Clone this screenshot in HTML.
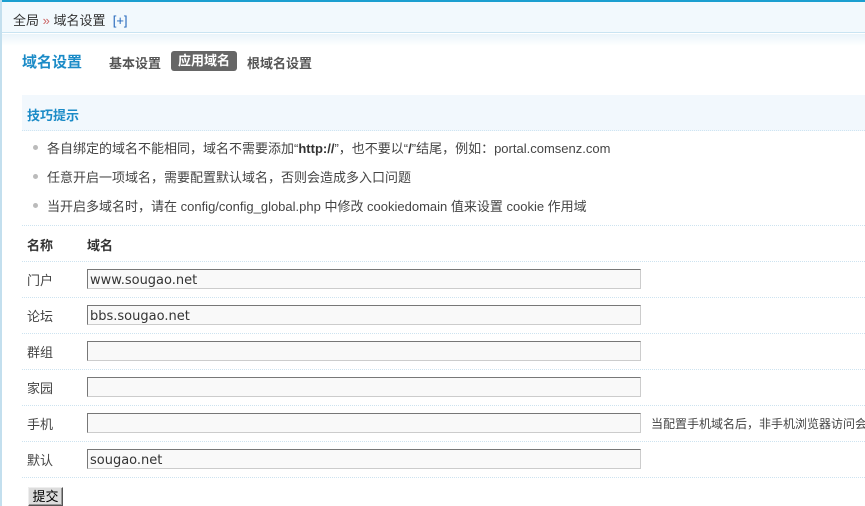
<!DOCTYPE html>
<html><head><meta charset="utf-8"><style>
*{margin:0;padding:0;box-sizing:border-box}
body{width:865px;height:506px;overflow:hidden;background:#fff;font-family:"Liberation Sans","Noto Sans CJK SC",sans-serif;font-size:12px;color:#333;position:relative}
.abs{position:absolute;white-space:nowrap}
.top{left:0;top:0;width:865px;height:2px;background:#1b9fd0}
.bar{left:0;top:2px;width:865px;height:31px;background:#f2f9fd;border-bottom:1px solid #c9e4f2}
.grad{left:0;top:34px;width:865px;height:12px;background:linear-gradient(#e9f4fa,#fff)}
.lb{left:0;top:0;width:2px;height:506px;background:#c3dfee}
.crumb{left:13px;top:10px;font-size:13px;color:#333}
.crumb .p{color:#2266bb}
.h{left:22px;top:51px;font-size:15px;font-weight:bold;color:#1b8bc7}
.tab{top:53px;font-size:13px;font-weight:bold;color:#555}
.tab.on{background:#666;color:#fff;border-radius:3px;padding:0 7px;top:51px;height:20px;line-height:20px}
.tips{left:22px;top:95px;width:843px;height:36px;background:#f2f8fd;border-bottom:1px dotted #cfe5f2}
.tips span{position:absolute;left:5px;top:10px;font-weight:bold;color:#1b8bc7;font-size:13px}
.li{left:33px;font-size:13px;color:#444}
.li:before{content:"";position:absolute;left:0;top:7px;width:5px;height:5px;border-radius:50%;background:#bbb}
.li b{color:#333}
.li span{padding-left:14px}
.sep{left:22px;width:843px;height:0;border-top:1px dotted #cde3f0}
.lab{left:27px;font-size:13px;color:#444}
.in{left:87px;width:554px;height:20px;background:#f9f9f9;border:1px solid #ccc;border-top-color:#777;border-left-color:#777;font-family:"DejaVu Sans",sans-serif;font-size:13px;color:#333;padding:2px 2px 0;line-height:17px}
.btn{left:28px;top:487px;width:35px;height:19px;background:#ddd;border:1px solid #555;border-top-color:#eee;border-left-color:#eee;box-shadow:inset -1px -1px #999;font-size:13px;text-align:center;line-height:17px;color:#000}
</style></head><body>
<div class="abs top"></div><div class="abs bar"></div><div class="abs grad"></div><div class="abs lb"></div>
<div class="abs crumb">全局 <span style="color:#c66">»</span> 域名设置 &nbsp;<span class="p">[+]</span></div>
<div class="abs h">域名设置</div>
<div class="abs tab" style="left:109px">基本设置</div>
<div class="abs tab on" style="left:171px">应用域名</div>
<div class="abs tab" style="left:247px">根域名设置</div>
<div class="abs tips"><span>技巧提示</span></div>
<div class="abs li" style="top:138px"><span>各自绑定的域名不能相同，域名不需要添加“<b>http://</b>”，也不要以“<b>/</b>”结尾，例如：<span style="padding:0">portal.comsenz.com</span></span></div>
<div class="abs li" style="top:167px"><span>任意开启一项域名，需要配置默认域名，否则会造成多入口问题</span></div>
<div class="abs li" style="top:196px"><span>当开启多域名时，请在 config/config_global.php 中修改 cookiedomain 值来设置 cookie 作用域</span></div>
<div class="abs sep" style="top:225px"></div>
<div class="abs lab" style="top:235px;font-weight:bold;color:#333">名称</div>
<div class="abs lab" style="left:87px;top:235px;font-weight:bold;color:#333">域名</div>
<div class="abs sep" style="top:261px"></div>
<div class="abs lab" style="top:270px">门户</div><div class="abs in" style="top:269px">www.sougao.net</div>
<div class="abs sep" style="top:297px"></div>
<div class="abs lab" style="top:306px">论坛</div><div class="abs in" style="top:305px">bbs.sougao.net</div>
<div class="abs sep" style="top:333px"></div>
<div class="abs lab" style="top:342px">群组</div><div class="abs in" style="top:341px"></div>
<div class="abs sep" style="top:369px"></div>
<div class="abs lab" style="top:378px">家园</div><div class="abs in" style="top:377px"></div>
<div class="abs sep" style="top:405px"></div>
<div class="abs lab" style="top:414px">手机</div><div class="abs in" style="top:413px"></div>
<div class="abs lab" style="left:651px;top:415px;font-size:12px">当配置手机域名后，非手机浏览器访问会</div>
<div class="abs sep" style="top:441px"></div>
<div class="abs lab" style="top:450px">默认</div><div class="abs in" style="top:449px">sougao.net</div>
<div class="abs sep" style="top:477px"></div>
<div class="abs btn">提交</div>
</body></html>
